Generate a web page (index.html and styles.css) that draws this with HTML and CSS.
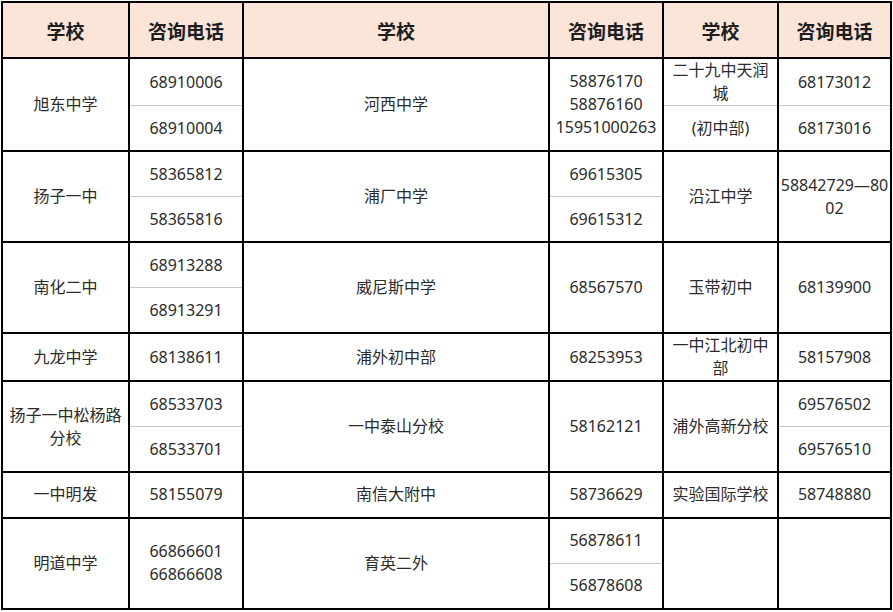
FILE: index.html
```html
<!DOCTYPE html>
<html lang="zh-CN">
<head>
<meta charset="utf-8">
<title>学校咨询电话</title>
<link rel="stylesheet" href="styles.css">
</head>
<body>
<table class="phones">
  <colgroup>
    <col class="c-school1"><col class="c-tel"><col class="c-school2"><col class="c-tel"><col class="c-school3"><col class="c-tel3">
  </colgroup>
  <thead>
    <tr class="head">
      <th>学校</th><th>咨询电话</th><th>学校</th><th>咨询电话</th><th>学校</th><th>咨询电话</th>
    </tr>
  </thead>
  <tbody>
    <tr class="sub">
      <td rowspan="2">旭东中学</td>
      <td class="top">68910006</td>
      <td rowspan="2">河西中学</td>
      <td rowspan="2">58876170<br>58876160<br>15951000263</td>
      <td class="top">二十九中天润城</td>
      <td class="top">68173012</td>
    </tr>
    <tr class="sub">
      <td class="bot">68910004</td>
      <td class="bot">(初中部)</td>
      <td class="bot">68173016</td>
    </tr>

    <tr class="sub">
      <td rowspan="2">扬子一中</td>
      <td class="top">58365812</td>
      <td rowspan="2">浦厂中学</td>
      <td class="top">69615305</td>
      <td rowspan="2">沿江中学</td>
      <td rowspan="2" class="tight">58842729—8002</td>
    </tr>
    <tr class="sub">
      <td class="bot">58365816</td>
      <td class="bot">69615312</td>
    </tr>

    <tr class="sub">
      <td rowspan="2">南化二中</td>
      <td class="top">68913288</td>
      <td rowspan="2">威尼斯中学</td>
      <td rowspan="2">68567570</td>
      <td rowspan="2">玉带初中</td>
      <td rowspan="2">68139900</td>
    </tr>
    <tr class="sub">
      <td class="bot">68913291</td>
    </tr>

    <tr class="sub">
      <td>九龙中学</td>
      <td>68138611</td>
      <td>浦外初中部</td>
      <td>68253953</td>
      <td>一中江北初中部</td>
      <td>58157908</td>
    </tr>

    <tr class="sub">
      <td rowspan="2">扬子一中松杨路分校</td>
      <td class="top">68533703</td>
      <td rowspan="2">一中泰山分校</td>
      <td rowspan="2">58162121</td>
      <td rowspan="2">浦外高新分校</td>
      <td class="top">69576502</td>
    </tr>
    <tr class="sub">
      <td class="bot">68533701</td>
      <td class="bot">69576510</td>
    </tr>

    <tr class="sub">
      <td>一中明发</td>
      <td>58155079</td>
      <td>南信大附中</td>
      <td>58736629</td>
      <td>实验国际学校</td>
      <td>58748880</td>
    </tr>

    <tr class="sub">
      <td rowspan="2">明道中学</td>
      <td rowspan="2">66866601<br>66866608</td>
      <td rowspan="2">育英二外</td>
      <td class="top">56878611</td>
      <td rowspan="2"></td>
      <td rowspan="2"></td>
    </tr>
    <tr class="sub">
      <td class="bot">56878608</td>
    </tr>
  </tbody>
</table>
</body>
</html>
```

FILE: styles.css
```css
html, body {
  margin: 0;
  padding: 0;
  background: #ffffff;
}

body {
  padding: 1px 0 0 1px;
}

.phones {
  border-collapse: collapse;
  table-layout: fixed;
  width: 889px;
  font-family: "Noto Sans", "Noto Sans CJK SC", sans-serif;
  font-size: 16px;
  color: #2b2b2b;
}

.c-school1 { width: 127px; }
.c-tel { width: 114px; }
.c-school2 { width: 306px; }
.c-school3 { width: 115px; }
.c-tel3 { width: 113px; }

.phones th,
.phones td {
  border: 2px solid #000;
  text-align: center;
  vertical-align: middle;
  padding: 0 2px;
  line-height: 23px;
  word-break: break-all;
}

.phones td.tight {
  padding: 0;
}

.head {
  height: 56px;
}

.phones th {
  background: #fbe5d9;
  font-family: "Noto Sans CJK SC", sans-serif;
  font-weight: 700;
  font-size: 19px;
  color: #1e1e1e;
}

.sub {
  height: 45.5px;
}

.phones td.top {
  border-bottom: 1px solid #c9c9c9;
}

.phones td.bot {
  border-top: 1px solid #c9c9c9;
}
```
